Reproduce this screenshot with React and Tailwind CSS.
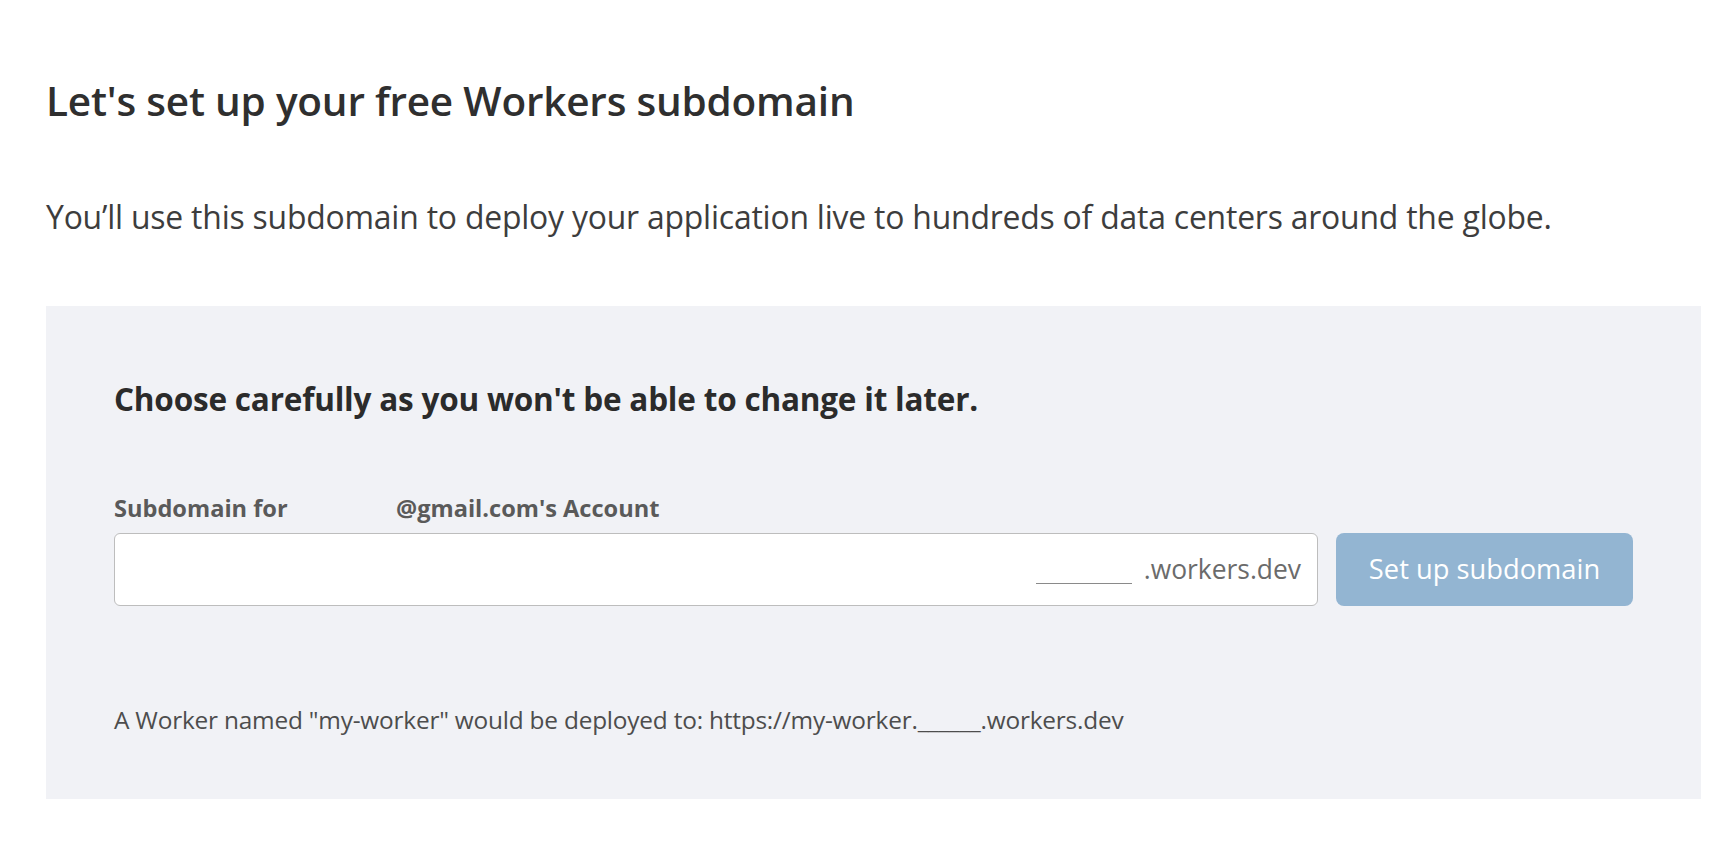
export default function App() {
  return (
    <div
      className="min-h-screen bg-white pl-[46px] pr-[30px] pt-[78px]"
      style={{ fontFamily: '"Open Sans", "Noto Sans", sans-serif' }}
    >
      <h1 className="text-[40.5px] leading-[46px] font-semibold text-[#2f2f2f] tracking-[-0.2px]">
        Let's set up your free Workers subdomain
      </h1>
      <p className="mt-[74px] text-[31.9px] leading-[38px] text-[#3d3d3d] tracking-[-0.2px]">
        You’ll use this subdomain to deploy your application live to hundreds of data centers around the globe.
      </p>
      <div className="mt-[70px] w-[1655px] h-[493px] bg-[#f1f2f6] px-[68px] pt-[75px]">
        <h2 className="text-[31.5px] leading-[36px] font-bold text-[#2b2b2b] tracking-[-0.2px]">
          Choose carefully as you won't be able to change it later.
        </h2>
        <label className="mt-[77px] flex text-[23.6px] leading-[28px] font-bold text-[#5a5a5a]">
          <span className="w-[282px]">Subdomain for</span>
          <span>@gmail.com's Account</span>
        </label>
        <div className="mt-[11px] flex gap-[18px]">
          <div className="flex-1 h-[73px] flex items-center justify-end bg-white border border-[#bdbdbd] rounded-[6px] pr-[16px]">
            <span className="w-[96px] h-[1px] bg-[#8a8a8a] mt-[28px] mr-[12px]"></span>
            <span className="text-[26.4px] text-[#6b6b6b]">.workers.dev</span>
          </div>
          <button className="w-[297px] h-[73px] rounded-[8px] bg-[#93b5d2] text-white text-[27.3px]">
            Set up subdomain
          </button>
        </div>
        <p className="mt-[101px] text-[24.4px] leading-[26px] text-[#4d4d4d] tracking-[-0.2px]">
          A Worker named "my-worker" would be deployed to: https://my-worker.______.workers.dev
        </p>
      </div>
    </div>
  );
}
